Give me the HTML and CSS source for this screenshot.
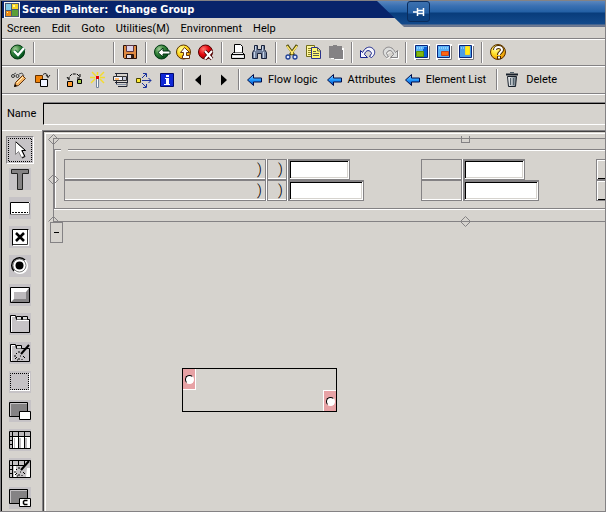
FILE: index.html
```html
<!DOCTYPE html>
<html lang="en">
<head>
<meta charset="utf-8">
<title>Screen Painter: Change Group</title>
<link rel="stylesheet" href="styles.css">
</head>
<body>
<svg class="defs" aria-hidden="true">
  <defs>
    <linearGradient id="blue" x1="0" y1="0" x2="0" y2="1"><stop offset="0" stop-color="#8cf"/><stop offset=".5" stop-color="#29f"/><stop offset="1" stop-color="#003fae"/></linearGradient>
    <radialGradient id="green" cx=".35" cy=".3" r=".7"><stop offset="0" stop-color="#a5cf9c"/><stop offset=".5" stop-color="#39863c"/><stop offset="1" stop-color="#004d18"/></radialGradient>
    <radialGradient id="gold" cx=".35" cy=".3" r=".75"><stop offset="0" stop-color="#ffffa0"/><stop offset=".5" stop-color="#ffdb21"/><stop offset="1" stop-color="#e78a00"/></radialGradient>
    <radialGradient id="red" cx=".35" cy=".3" r=".75"><stop offset="0" stop-color="#ff7a70"/><stop offset=".5" stop-color="#e70810"/><stop offset="1" stop-color="#940000"/></radialGradient>
    <linearGradient id="can" x1="0" y1="0" x2="1" y2="0"><stop offset="0" stop-color="#fff"/><stop offset="1" stop-color="#63717b"/></linearGradient>
    <symbol id="arrow" viewBox="0 0 18 18"><path d="M1.500 9 7.500 3.500V7H15.500V11H7.500V14.500Z" fill="url(#blue)" stroke="#000c4a"/></symbol>
    <symbol id="wand" viewBox="0 0 22 22"><path d="m20 3-8 9" stroke="#000" stroke-width="2"/><path d="M10 9v2M7 11l1 1M14 14l2 2M10 16v2M6 17l2-2M5 14h2M11 14h1M13 17v1M8 18h1" stroke="#000"/></symbol>
  </defs>
</svg>

<div class="window">
  <header class="titlebar">
    <svg class="app-icon" viewBox="0 0 16 16"><path d="M0 0h16v16H0z" fill="#f4f4f4"/><path d="M1 1h14v14H1z" fill="#495a73"/><path d="M2 2h5v6H2z" fill="#84cbe7"/><path d="M8 2h6v5H8z" fill="#f7d321"/><path d="M2 9h5v5H2z" fill="#ef8a10"/><path d="M8 8h6v6H8z" fill="#5a9e39"/><path d="M9 3h2v2H9zM3 10h1v1H3z" fill="#fff59c"/></svg>
    <h1>Screen Painter:&nbsp; Change Group</h1>
  </header>
  <div class="session-bar">
    <button class="pin" aria-label="Pin"><svg viewBox="0 0 12 10"><path d="M0 5h4M4.500 1v8M5 3.500h5M5 6.500h5M10.500 1v8" stroke="#fff" stroke-width="1.500" fill="none"/></svg></button>
  </div>

  <nav class="menu">
    <a href="#">Screen</a><a href="#">Edit</a><a href="#">Goto</a><a href="#">Utilities(M)</a><a href="#">Environment</a><a href="#">Help</a>
  </nav>

  <div class="toolbar standard">
    <button aria-label="Enter"><svg viewBox="0 0 18 18"><circle cx="8.500" cy="9" r="7" fill="url(#green)" stroke="#003810"/><path d="m5 8 4 4 6-7" stroke="#163" stroke-width="4" fill="none"/><path d="m5 8 4 4 6-7" stroke="#fff" stroke-width="2.300" fill="none"/></svg></button>
    <i class="sep"></i><span class="command"></span><i class="sep"></i>
    <button aria-label="Save"><svg viewBox="0 0 18 18"><path d="M2.500 2.500h13v13h-12l-1-1z" fill="#df8a42" stroke="#29100a"/><path d="M5.500 2.500h7v6h-7z" fill="#ded3e7" stroke="#5a3542"/><path d="M5.500 11.500h7v4h-7z" fill="#dedbe7" stroke="#29100a"/><path d="M10 12h2v3h-2z" fill="#312018"/></svg></button>
    <i class="sep"></i>
    <button aria-label="Back"><svg viewBox="0 0 18 18"><circle cx="8.500" cy="9" r="7" fill="url(#green)" stroke="#003810"/><path d="M5 9.500 10 5v3h7v3h-7v3z" fill="#fff" stroke="#031"/></svg></button>
    <button aria-label="Exit"><svg viewBox="0 0 18 18"><circle cx="8.500" cy="9" r="7" fill="url(#gold)" stroke="#5a3500"/><path d="m9.500 4.500 5 5h-3v3h3v3h-7v-3h1v-3h-3z" fill="#fff" stroke="#631"/></svg></button>
    <button aria-label="Cancel"><svg viewBox="0 0 18 18"><circle cx="8.500" cy="9" r="7" fill="url(#red)" stroke="#520000"/><path d="m8 8 7 8m0-8-7 8" stroke="#400" stroke-width="3.500"/><path d="m8 8 7 8m0-8-7 8" stroke="#fff" stroke-width="2"/></svg></button>
    <i class="sep"></i>
    <button aria-label="Print"><svg viewBox="0 0 18 18"><path d="M5.500 1.500h6l2 2v7h-8z" fill="#fff" stroke="#000"/><path d="m2.500 11.500 2-2h9l2 2z" fill="#eee" stroke="#000"/><path d="M2.500 11.500h13v4h-13z" fill="#dedfde" stroke="#000"/><path d="M4 13.500h10" stroke="#fff"/><path d="M6 9.500h7" stroke="#777"/></svg></button>
    <button aria-label="Find"><svg viewBox="0 0 18 18"><path d="M3.500 2.500h3v4h4v-4h3v4l2 3v6h-5v-5h-4v5h-5v-6l2-3z" fill="#73829c" stroke="#18213a"/><path d="M4.500 3v5M11.500 3v5M3.500 9v6M12.500 9v6" stroke="#c6d3e7"/></svg></button>
    <i class="sep"></i>
    <button aria-label="Cut"><svg viewBox="0 0 18 18"><path d="m4 2 7 10M14 2 7 12" stroke="#4a4500" stroke-width="2.600"/><path d="m4 3 6 8M14 3 8 11" stroke="#ffe76b" stroke-width="1.500"/><circle cx="5" cy="14" r="2" fill="#dbe6ff" stroke="#214194" stroke-width="1.300"/><circle cx="12" cy="14" r="2" fill="#dbe6ff" stroke="#214194" stroke-width="1.300"/></svg></button>
    <button aria-label="Copy"><svg viewBox="0 0 18 18"><path d="M1.500 2.500h8v11h-8z" fill="#fff79c" stroke="#736d18"/><path d="M3 5.500h5M3 7.500h5M3 9.500h5M3 11.500h5" stroke="#8c8221"/><path d="M6.500 4.500h6l3 3v8h-9z" fill="#fff773" stroke="#29318c"/><path d="M12.500 5v3h3M8 8.500h3M8 10.500h6M8 12.500h6" stroke="#5a5d52" fill="none"/></svg></button>
    <button aria-label="Paste"><svg viewBox="0 0 18 18"><path d="M4 5h13v12H8v-1H4z" fill="#fff"/><path d="M2 3h4V2h4v1h5v4h1v9H7v-1H2z" fill="#848284"/></svg></button>
    <i class="sep"></i>
    <button aria-label="Undo"><svg viewBox="0 0 18 18"><path d="M1.500 7.500v7h7l-3-3c1-5 6-5 7-1l-2 3 2 1c7-5 1-12-4-10-2 .500-4 3-5 5z" fill="#f5f5fc" stroke="#18248c"/></svg></button>
    <button aria-label="Redo"><svg viewBox="0 0 18 18"><path d="M17.500 8.500v7h-7l3-3c-1-5-6-5-7-1l2 3-2 1c-7-5-1-12 4-10 2 .500 4 3 5 5z" stroke="#fff" fill="none"/><path d="M16.500 7.500v7h-7l3-3c-1-5-6-5-7-1l2 3-2 1c-7-5-1-12 4-10 2 .500 4 3 5 5z" fill="#dedfde" stroke="#848284"/></svg></button>
    <i class="sep"></i>
    <button aria-label="Create session"><svg viewBox="0 0 18 18"><path d="M1 1h16v16H1z" fill="#fff"/><path d="M3 16.500h13.500V3" stroke="#777" fill="none"/><path d="M2.500 2.500h12v12h-12z" fill="#5ab2f7" stroke="#08247b"/><path d="M10 4h4v10h-4z" fill="#0860d6"/><path d="M4 5h7" stroke="#cef" stroke-dasharray="1 1"/><path d="M3.500 8.500h7v5h-7z" fill="#84b610" stroke="#5a9600"/></svg></button>
    <button aria-label="Generate shortcut"><svg viewBox="0 0 18 18"><path d="M1 1h16v16H1z" fill="#fff"/><path d="M3 16.500h13.500V3" stroke="#777" fill="none"/><path d="M2.500 2.500h12v12h-12z" fill="#5ab2f7" stroke="#08247b"/><path d="M4 5h9" stroke="#cef" stroke-dasharray="1 1"/><path d="M6.500 8.500h7v4h-7z" fill="#ff6510" stroke="#c64521"/></svg></button>
    <button aria-label="Layout"><svg viewBox="0 0 18 18"><path d="M1 1h16v16H1z" fill="#fff"/><path d="M3 16.500h13.500V3" stroke="#777" fill="none"/><path d="M2.500 2.500h12v12h-12z" fill="#4a9ee7" stroke="#08247b"/><path d="M4 5h4" stroke="#cef" stroke-dasharray="1 1"/><path d="M8.500 3.500h4v8h-4z" fill="#ffef18" stroke="#ffdb21"/></svg></button>
    <i class="sep"></i>
    <button aria-label="Help"><svg viewBox="0 0 18 18"><circle cx="9" cy="9" r="7.500" fill="url(#gold)" stroke="#5a3100"/><path d="M6 7c0-4 7-4 7 0 0 2-3 2-3 5M10 13v3" stroke="#4a2800" stroke-width="4" fill="none"/><path d="M6 7c0-4 7-4 7 0 0 2-3 2-3 5M10 13.500v2" stroke="#fff" stroke-width="2" fill="none"/></svg></button>
  </div>

  <div class="toolbar application">
    <button aria-label="Display or change"><svg viewBox="0 0 18 18"><circle cx="3" cy="5" r="1.500" fill="none" stroke="#333"/><circle cx="7.500" cy="5" r="1.500" fill="none" stroke="#333"/><path d="m4 3 2-1M9 3l3-1 2 3" stroke="#555" fill="none"/><path d="m4.500 15.500 1-4 7-7 3 3-7 7z" fill="#f7b563" stroke="#5a3110"/><path d="m7 12 6-6" stroke="#fff1c0"/><path d="m4 16 1-3 2 2z" fill="#000"/></svg></button>
    <button aria-label="Other object"><svg viewBox="0 0 18 18"><path d="M2.500 4.500h7v7h-7z" fill="#ef8208" stroke="#633000"/><path d="M7.500 8.500h7v7h-7z" fill="#eff3ff" stroke="#000"/><path d="M10 3.500q4-3 5 3M13 4l2 2.500L17 4" stroke="#222" fill="none"/></svg></button>
    <i class="sep"></i>
    <button aria-label="Convert"><svg viewBox="0 0 18 18"><path d="M1.500 10.500h5v5h-5z" fill="#ff9c31" stroke="#000"/><path d="M11.500 8.500h4v4h-4z" fill="#a5cb4a" stroke="#000"/><path d="M3 9V6l3-3h5l3 3M1 6l2 3M14 3v4h-4" stroke="#000" fill="none" stroke-dasharray="3 1"/></svg></button>
    <button aria-label="Wizard"><svg viewBox="0 0 18 18"><path d="m3 1 4 4M15 1l-4 4M6 8l-4 4M11 8l4 4M1 6.500h5M11 6.500h5M8.500 1v3" stroke="#f3dc30" stroke-width="1.500"/><path d="M7.500 7.500h2v9h-2z" fill="#fff" stroke="#73869c"/><path d="M7 5h3v3H7z" fill="#e70000"/></svg></button>
    <button aria-label="Measure"><svg viewBox="0 0 18 18"><path d="M3 2.500h13M4.500 3v10M3 11.500h12v4H6M15.500 3v9" stroke="#212431" fill="none"/><path d="M1.500 5.500h9v4h-9z" fill="#eff3ff" stroke="#333"/><path d="M3 7h4v2H3z" fill="#ffbd73"/><path d="M10.500 5.500h4v4h-4z" fill="#c6cbde" stroke="#333"/><path d="M4 13.500h10" stroke="#8491a5"/></svg></button>
    <button aria-label="Move"><svg viewBox="0 0 18 18"><path d="M1.500 7.500h4v4h-4z" fill="#ffeb31" stroke="#4a4500"/><path d="M7 9.500h9M13.500 7l2.500 2.500-2.500 2.500M7 7l4-4M8 2.500h3.500V6M7 12l4 4M8 16.500h3.500V13" stroke="#19309c" fill="none"/></svg></button>
    <button aria-label="Information"><svg viewBox="0 0 18 18"><path d="M2.500 2.500h13v13h-13z" fill="#1028d6" stroke="#00086b"/><path d="M8 4h3v2H8zM7 7h4v6h1v1H6v-1h2V8H7z" fill="#fff"/></svg></button>
    <i class="sep"></i>
    <button aria-label="Previous"><svg viewBox="0 0 18 18"><path d="m4 9 6-5.500v11z" fill="#000"/></svg></button>
    <button aria-label="Next"><svg viewBox="0 0 18 18"><path d="M13 9 7 3.500v11z" fill="#000"/></svg></button>
    <i class="sep"></i>
    <button class="labelled"><svg><use href="#arrow"/></svg>Flow logic</button>
    <button class="labelled"><svg><use href="#arrow"/></svg>Attributes</button>
    <button class="labelled"><svg><use href="#arrow"/></svg>Element List</button>
    <i class="sep"></i>
    <button class="labelled"><svg viewBox="0 0 18 18"><path d="M3.500 5.500h9l-1 10h-7z" fill="url(#can)" stroke="#18202a"/><path d="M2 3.500h12" stroke="#18202a" stroke-width="2"/><path d="M6 1.500h4M6.500 7v7M9.500 7v7" stroke="#52616b"/></svg>Delete</button>
  </div>

  <div class="name-row">
    <label for="name">Name</label><input id="name" type="text">
  </div>

  <main class="work">
    <aside class="toolbox">
      <button class="selected" aria-label="Select"><svg viewBox="0 0 24 24"><path d="M.500.500h23v23H.500z" fill="none" stroke="#000" stroke-dasharray="1 1" stroke-dashoffset=".5"/><path d="M7.500 3.500v13l3-3 3 6 3-1-3-6h4z" fill="#fff" stroke="#848284"/><path d="m8 4 9.500 8.500H14l3 6-3 1.500" stroke="#000" fill="none"/></svg></button>
      <button aria-label="Text field"><svg viewBox="0 0 22 22"><path d="M2.500 1.500h17v4h-6v16h-5v-16h-6z" fill="#848284" stroke="#222"/></svg></button>
      <button aria-label="Input field"><svg viewBox="0 0 22 22"><path d="M1 5h20v13H1z" fill="#fff"/><path d="M1.500 17V5.500H20" stroke="#000" fill="none"/><path d="M1 17.500h19.500V6" stroke="#848284" fill="none"/><path d="M3 15.500h16" stroke="#000" stroke-dasharray="2 1"/></svg></button>
      <button aria-label="Checkbox"><svg viewBox="0 0 22 22"><path d="M3 3h17v17H3z" fill="#fff"/><path d="M3.500 19.500v-16h16" fill="none" stroke="#000"/><path d="M4 18.500h14.500V4" fill="none" stroke="#333"/><path d="m7 7 8 8m0-8-8 8" stroke="#000" stroke-width="2.500"/></svg></button>
      <button aria-label="Radio button"><svg viewBox="0 0 22 22"><circle cx="11" cy="11" r="8" fill="#fff"/><circle cx="10.500" cy="10.500" r="6.500" fill="none" stroke="#777"/><path d="M5 16A7.500 7.500 0 0 1 16 5" stroke="#000" stroke-width="1.500" fill="none"/><circle cx="10.500" cy="10.500" r="4" fill="#000"/></svg></button>
      <button aria-label="Pushbutton"><svg viewBox="0 0 22 22"><path d="M1.500 3.500h19v15h-19z" fill="#848284" stroke="#000"/><path d="M2 4h18l-3 4H5v7l-3 3z" fill="#fff"/><path d="M5 8h12v7H5z" fill="#bdbabd"/></svg></button>
      <button aria-label="Tabstrip"><svg viewBox="0 0 22 22"><path d="M1.500 19.500v-17h5l1 4h13v13z" fill="#c6c3c6" stroke="#000"/><path d="M2.500 19V3.500H6M8 7.500h12" stroke="#fff" fill="none"/><path d="M7.500 6.500v-3h5v3M13.500 6.500v-3h5v3" stroke="#000" fill="#ddd"/></svg></button>
      <button aria-label="Tabstrip wizard"><svg viewBox="0 0 22 22"><path d="M1.500 19.500v-17h5l1 4h13v13z" fill="#c6c3c6" stroke="#000"/><path d="M2.500 19V3.500H6" stroke="#fff" fill="none"/><path d="M7.500 6.500v-3h5v3" stroke="#000" fill="#ddd"/><use href="#wand"/></svg></button>
      <button aria-label="Box"><svg viewBox="0 0 22 22"><path d="M1 2h20v18H1z" fill="#fff"/><path d="M1 2h19v17H1z" fill="#c6c3c6"/><path d="M1.500 2.500h18v16h-18z" fill="none" stroke="#000" stroke-dasharray="1 1" stroke-dashoffset=".5"/></svg></button>
      <button aria-label="Subscreen area"><svg viewBox="0 0 22 22"><path d="M.500 2.500h18v14H.500z" fill="#848284" stroke="#000"/><path d="M1.500 16V3.500H18" stroke="#c6c3c6" fill="none"/><path d="M10.500 11.500h11v8h-11z" fill="#fff" stroke="#000"/></svg></button>
      <button aria-label="Table control"><svg viewBox="0 0 22 22"><path d="M.500 2.500h21v17H.500z" fill="#fff" stroke="#000"/><path d="M1 3h20v4H1zM1 8h3v11H1z" fill="#bdbabd"/><path d="M5 9h1v10H5zM10 9h2v10h-2zM16 9h2v10h-2z" fill="#bdbabd"/><path d="M3.500 3v16M9.500 3v16M15.500 3v16M1 7.500h20M1 11.500h3M1 15.500h3" stroke="#000"/></svg></button>
      <button aria-label="Table wizard"><svg viewBox="0 0 22 22"><path d="M.500 2.500h21v17H.500z" fill="#c6c3c6" stroke="#000"/><path d="M5 8h2v11H5zM18 10h3v9h-4z" fill="#fff"/><path d="M3.500 3v16M9.500 3v4M15.500 3v4M1 7.500h15M1 11.500h3M1 15.500h3" stroke="#000"/><use href="#wand"/></svg></button>
      <button aria-label="Custom control"><svg viewBox="0 0 22 22"><path d="M.500 2.500h18v14H.500z" fill="#848284" stroke="#000"/><path d="M1.500 16V3.500H18" stroke="#c6c3c6" fill="none"/><path d="M10.500 11.500h11v8h-11z" fill="#fff" stroke="#000"/><path d="M18.500 13.500h-3l-1 1v2l1 1h3" stroke="#000" stroke-width="1.500" fill="none"/></svg></button>
    </aside>

    <section class="canvas" aria-label="Layout">
      <div class="outline"></div>
      <div class="frame"></div><i class="frame-gap"></i>
      <span class="cell c1 r1">)</span><span class="cell c2 r1">)</span>
      <span class="cell c1 r2">)</span><span class="cell c2 r2">)</span>
      <input class="field c3 r1 short" aria-label="Group from"><input class="field c3 r2 long" aria-label="Date from">
      <span class="cell c4 r1"></span><span class="cell c4 r2"></span>
      <input class="field c5 r1 short" aria-label="Group to"><input class="field c5 r2 long" aria-label="Date to">
      <button class="more c6 r1" aria-label="Multiple selection"></button><button class="more c6 r2" aria-label="Multiple selection"></button>
      <svg class="handle h-top" viewBox="0 0 11 11"><path d="m.500 5.500 5-5 5 5-5 5z"/></svg>
      <svg class="handle h-left" viewBox="0 0 11 11"><path d="m.500 5.500 5-5 5 5-5 5z"/></svg>
      <svg class="handle h-corner" viewBox="0 0 11 11"><path d="m.500 5.500 5-5 5 5"/></svg>
      <svg class="handle h-bottom" viewBox="0 0 11 11"><path d="m.500 5.500 5-5 5 5-5 5z"/></svg>
      <i class="handle-square"></i>
      <button class="collapse" aria-label="Collapse"><i></i></button>
      <div class="group">
        <label class="option first"><input type="radio" name="g" aria-label="Option 1"></label>
        <label class="option last"><input type="radio" name="g" aria-label="Option 2"></label>
      </div>
    </section>
  </main>
</div>
</body>
</html>
```
FILE: styles.css
```css
* { box-sizing: border-box; }

:root {
  --face: #d6d3ce;
  --shade: #848284;
}

body {
  margin: 0;
  background: var(--face);
  color: #000;
  font: 11px/14px Roboto, "Liberation Sans", sans-serif;
}

button {
  display: flex;
  align-items: center;
  justify-content: center;
  margin: 0;
  padding: 0;
  border: 0;
  background: none;
  color: inherit;
  font: inherit;
}

svg { display: block; flex: none; }
.defs { position: absolute; width: 0; height: 0; }

.window {
  position: relative;
  display: flex;
  flex-direction: column;
  height: 100vh;
  overflow: hidden;
  border: 1px solid var(--shade);
  box-shadow: inset 1px 0 #000;
  padding-left: 1px;
}

.titlebar {
  display: flex;
  align-items: center;
  gap: 2px;
  height: 17px;
  padding-left: 2px;
  background: #08246b;
  color: #fff;
}
.titlebar h1 {
  margin: 0;
  font: bold 11px/14px "DejaVu Sans Condensed", sans-serif;
  white-space: nowrap;
}
.app-icon { width: 16px; height: 16px; }

.session-bar {
  position: absolute;
  top: 0;
  left: 376px;
  right: 0;
  height: 26px;
  background: linear-gradient(#5a86bd, #3a70b2 5px, #2360a5 11px, #083c7b 12px, #134a8c 23px, #737d94 24px, #63718c);
  clip-path: polygon(0 0, 100% 0, 100% 100%, 27px 100%);
  padding-left: 30px;
}
.pin {
  width: 23px;
  height: 21px;
  border: 1px solid #0a2c5c;
  border-radius: 3px;
  background: linear-gradient(#3c70ae, #2560a5 11px, #0c3f7d 12px);
}
.pin svg { width: 12px; height: 10px; }

.menu {
  display: flex;
  align-items: center;
  gap: 11px;
  height: 20px;
  padding: 1px 0 0 5px;
}
.menu a { color: inherit; text-decoration: none; }

.toolbar {
  display: flex;
  align-items: center;
  border-top: 1px solid var(--shade);
  box-shadow: inset 0 1px #fff;
  padding-left: 5px;
}
.toolbar svg { width: 18px; height: 18px; }
.standard { height: 27px; }
.standard button { width: 22px; }
.application { height: 28px; }
.application button { width: 23px; }
.application .labelled {
  width: auto;
  gap: 4px;
  padding: 0 6px 0 2px;
  white-space: nowrap;
}
.sep {
  width: 2px;
  height: 21px;
  margin: 0 4px;
  border-left: 1px solid var(--shade);
  border-right: 1px solid #fff;
}
.command { width: 70px; }

.name-row {
  display: flex;
  align-items: center;
  gap: 8px;
  height: 37px;
  border-top: 1px solid var(--shade);
  box-shadow: inset 0 1px #fff;
  padding: 4px 0 0 5px;
}
.name-row label { width: 28px; }
.name-row input {
  flex: 1;
  height: 22px;
  border: 0;
  border-top: 1px solid #000;
  border-left: 1px solid #000;
  border-bottom: 1px solid #fff;
  border-radius: 0;
  background: transparent;
  box-shadow: 0 -1px var(--shade);
  font: inherit;
}

.work { display: flex; flex: 1; min-height: 0; }

.toolbox {
  display: flex;
  flex-direction: column;
  align-items: center;
  gap: 7px;
  width: 40px;
  padding: 5px 4px 0 0;
  border-top: 1px solid #fff;
}
.toolbox button { flex: none; width: 22px; height: 22px; background: #c6c3c6; }
.toolbox svg { width: 22px; height: 22px; }
.toolbox .selected {
  width: 28px;
  height: 28px;
  margin-bottom: -3px;
  border: 1px solid var(--shade);
  border-right-color: #fff;
  border-bottom-color: #fff;
}
.toolbox .selected svg { width: 24px; height: 24px; }

.canvas {
  position: relative;
  flex: 1;
  min-width: 0;
  overflow: hidden;
  border-top: 1px solid var(--shade);
  border-left: 1px solid var(--shade);
  box-shadow: inset 1px 1px #424142, inset 2px 2px var(--face), inset 3px 3px #fff;
}
.outline {
  position: absolute;
  left: 10px;
  right: -4px;
  top: 7px;
  height: 84px;
  border: 1px solid var(--shade);
}
.frame {
  position: absolute;
  left: 11px;
  right: -4px;
  top: 18px;
  height: 60px;
  border: 1px solid var(--shade);
  box-shadow: inset 1px 1px #fff, 0 1px #fff;
}
.frame-gap { position: absolute; left: 18px; top: 18px; width: 7px; height: 2px; background: var(--face); }

.cell, .field, .more { position: absolute; height: 21px; border: 1px solid var(--shade); }
.cell {
  padding: 0 3px;
  box-shadow: inset 0 -1px #fff, 1px 0 #fff;
  font-size: 15px;
  font-weight: 300;
  line-height: 18px;
  text-align: right;
}
.field {
  padding: 2px 4px;
  border-radius: 0;
  background: #fff;
  box-shadow: inset 1px 1px var(--shade), inset -1px -1px #fff, inset 2px 2px #000, inset -2px -2px var(--face);
  font: inherit;
}
.more { box-shadow: inset 1px 1px #fff, inset 0 -1px #000; }
.r1 { top: 28px; }
.r2 { top: 49px; }
.c1 { left: 21px; width: 202px; }
.c2 { left: 224px; width: 20px; }
.c3 { left: 245px; }
.c4 { left: 378px; width: 41px; }
.c5 { left: 420px; }
.c6 { left: 553px; width: 24px; }
.short { width: 62px; }
.long { width: 76px; }

.handle { position: absolute; width: 11px; height: 11px; fill: none; stroke: var(--shade); }
.h-top { left: 5px; top: 3px; }
.h-left { left: 5px; top: 43px; }
.h-corner { left: 5px; top: 85px; }
.h-bottom { left: 417px; top: 85px; }
.handle-square {
  position: absolute;
  left: 418px;
  top: 5px;
  width: 9px;
  height: 7px;
  border: 1px solid var(--shade);
  border-top: 0;
}
.collapse {
  position: absolute;
  left: 7px;
  top: 91px;
  width: 13px;
  height: 21px;
  border: 1px solid var(--shade);
}
.collapse i { width: 5px; height: 1px; background: #000; }

.group {
  position: absolute;
  left: 139px;
  top: 237px;
  width: 155px;
  height: 44px;
  border: 1px solid #000;
}
.option {
  position: absolute;
  display: flex;
  align-items: center;
  justify-content: center;
  width: 13px;
  height: 21px;
  background: #e7a2a5;
}
.first { left: 0; top: 0; border-right: 1px solid #fff; border-bottom: 1px solid #fff; }
.last { right: 0; bottom: 0; border-left: 1px solid #fff; border-top: 1px solid #fff; }
.option input {
  appearance: none;
  width: 9px;
  height: 9px;
  margin: 0;
  border: 1px solid #000;
  border-right-color: #fff;
  border-bottom-color: #fff;
  border-radius: 50%;
  background: #fff;
}
```
